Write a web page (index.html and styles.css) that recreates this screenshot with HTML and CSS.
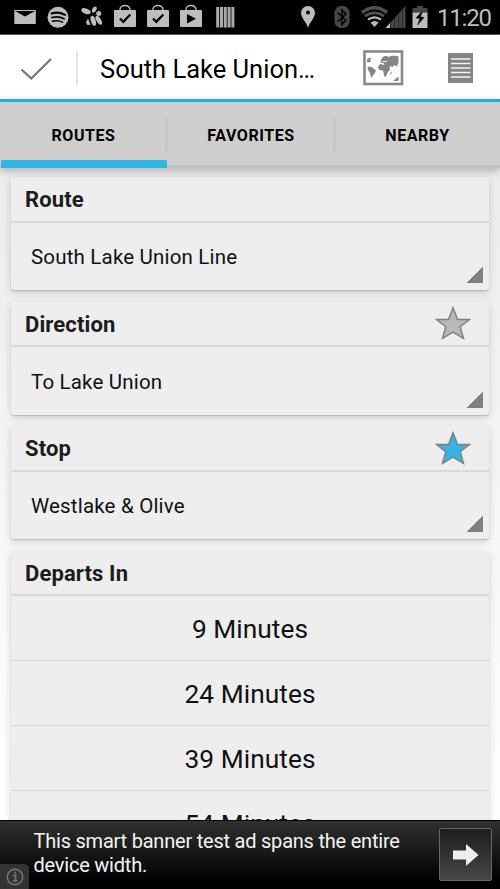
FILE: index.html
```html
<!DOCTYPE html>
<html lang="en">
<head>
<meta charset="utf-8">
<title>South Lake Union Line</title>
<link rel="stylesheet" href="styles.css">
</head>
<body>
<div class="screen">
  <svg class="defs" width="0" height="0" aria-hidden="true">
    <symbol id="bag" viewBox="0 0 32 34">
      <path d="M11 11V9.500a5 4 0 0 1 10 0V11" fill="none" stroke="#bdbdbd" stroke-width="1.400"/>
      <rect x="5" y="10" width="22" height="17" rx="1" fill="#bdbdbd"/>
    </symbol>
    <symbol id="star" viewBox="0 0 36 34">
      <path d="M18 1.800l4.500 11.600 12 .1-9.300 7.200 3.300 11.600L18 26 7.500 32.300l3.300-11.600-9.300-7.200 12-.1z" stroke="#808080" stroke-width="1.500"/>
    </symbol>
  </svg>

  <header class="status">
    <div class="notes">
      <svg viewBox="0 0 32 34"><rect x="5.300" y="10" width="21.500" height="14" fill="#bdbdbd"/><path d="M6 11h20l-10 5.500z"/></svg>
      <svg viewBox="0 0 32 34"><circle cx="16" cy="17.300" r="10.500" fill="#bdbdbd"/><g fill="none" stroke="#000" stroke-linecap="round"><path d="M9.500 13.500q7-2.300 13.500 1.300" stroke-width="2.100"/><path d="M10 17.500q6.500-1.800 12 1.200" stroke-width="1.800"/><path d="M10.500 21.200q5.500-1.500 10 1" stroke-width="1.500"/></g></svg>
      <svg viewBox="0 0 32 34"><g fill="#bdbdbd"><ellipse cx="10" cy="11.200" rx="4.900" ry="2.600" transform="rotate(20 10 11.200)"/><ellipse cx="18.300" cy="9.600" rx="2" ry="3.300" transform="rotate(30 18.300 9.600)"/><circle cx="22.700" cy="13.500" r="2.500"/><path d="M12 18.500l2.500 6.500-3.500-.2-1-2.500z"/><ellipse cx="17.300" cy="20.800" rx="2.400" ry="5.200" transform="rotate(-18 17.300 20.800)"/><ellipse cx="22.800" cy="20.300" rx="2.300" ry="5" transform="rotate(-30 22.800 20.300)"/></g></svg>
      <svg viewBox="0 0 32 34"><use href="#bag"/><path d="M11 18.500l3.300 3.300 7-7.300" fill="none" stroke="#000" stroke-width="2.300"/></svg>
      <svg viewBox="0 0 32 34"><use href="#bag"/><path d="M11 18.500l3.300 3.300 7-7.300" fill="none" stroke="#000" stroke-width="2.300"/></svg>
      <svg viewBox="0 0 32 34"><use href="#bag"/><path d="M12 14v9.500l9-4.700z"/></svg>
      <svg viewBox="0 0 32 34"><path d="M8.700 7v20.500M12.500 7v20.500M16.300 7v20.500M20.100 7v20.500M23.900 7v20.500" stroke="#aaa" stroke-width="3"/></svg>
    </div>
    <div class="system">
      <svg width="16" height="34" viewBox="0 0 16 34"><path d="M8 28C6.500 22 1 18 1 13a7 7 0 0 1 14 0c0 5-5.500 9-7 15z" fill="#bdbdbd"/><circle cx="8" cy="12.500" r="2" /></svg>
      <svg class="bluetooth" width="16" height="34" viewBox="0 0 16 34"><rect x=".5" y="6" width="15" height="22" rx="6.500" fill="#464646"/><path d="M3.800 12.500l8.200 8-4 4V10l4 4-8.200 7.500" fill="none" stroke="#000" stroke-width="1.500"/></svg>
      <svg class="signal" width="46" height="34" viewBox="0 0 46 34"><g fill="none"><path d="M2 12.500q12.500-9.500 25 0" stroke="#505050" stroke-width="3.600"/><path d="M5 16q9.500-6.500 19 0" stroke="#505050" stroke-width="3"/><path d="M8 19.700q6.500-4.700 13 0" stroke="#bdbdbd" stroke-width="2.200"/></g><path d="M10.500 22.500q4-3 8 0l-4 4.500z" fill="#bdbdbd"/><path d="M25.500 28L45.500 6v22z" fill="#464646"/><path d="M25.500 28l4.500-5v5z" fill="#bdbdbd"/><path d="M30.500 22v6M34.500 18v10M38.500 14v14M42.500 10v18" stroke="#242424" stroke-width=".8"/></svg>
      <svg class="battery" width="16" height="34" viewBox="0 0 16 34"><path d="M.5 12.500V8H5V5.800h6V8h4.500v4.500z" fill="#464646"/><path d="M.5 12.500h15V28H.5z" fill="#bdbdbd"/><path d="M10.500 11L4 18l4 .5-2.500 6.500 6.500-7.500-3.500-.5z" stroke="#000" stroke-width=".5"/></svg>
      <span class="clock">11:20</span>
    </div>
  </header>

  <div class="actionbar">
    <svg class="check" width="32" height="24" viewBox="0 0 32 24"><path d="M1.500 12.500l9.800 9L31 2" fill="none" stroke="#777" stroke-width="2.300"/></svg>
    <h1 class="title">South Lake Union…</h1>
    <svg class="map" width="41" height="36" viewBox="0 0 41 36"><rect x="1.500" y="1.500" width="37.500" height="32.500" fill="#fff" stroke="#888" stroke-width="2.600"/><g fill="#858585"><path d="M4 9.500l3-2 1.500 1-2 1.500 2 1-1.500 1-2 .5-1-1zM4.500 17l2-.5 3 1 3.500 3-1.500 3-3.500 4.500-1-5-2-3zM17.500 12.500l.5-3 2.500-3 3-.7 2 1.200 3-1.200h4l3 .7v6.500l-2 3.500-2-1.500-2.500 2.500-1-2-1.500 2 .5 2-2 2.500-2 4.500-1.500.3-1.500-6.300-4-.7-1-2.800 2-3 4.500 1-1-2z"/><path d="M27.500 22.500l1-1v2.500l-1 1.200zM30 31l5.500-4.500V31z"/></g><path d="M19.500 11.500h5" stroke="#fff" stroke-width=".8"/></svg>
    <svg class="list" width="25" height="30" viewBox="0 0 25 30"><path d="M0 0h25v30H0z" fill="#858585"/><path d="M3 6h19.500M3 10.500h19.500M3 15h19.500M3 19.500h19.500M3 24h19.500" stroke="#f4f4f4" stroke-width="1.600"/></svg>
  </div>

  <nav class="tabs">
    <div class="tab active">ROUTES</div>
    <div class="tab">FAVORITES</div>
    <div class="tab">NEARBY</div>
  </nav>

  <main class="content">
    <section class="card">
      <h2 class="head">Route</h2>
      <div class="spinner">South Lake Union Line</div>
    </section>
    <section class="card">
      <h2 class="head low">Direction<svg class="star" width="36" height="34"><use href="#star"/></svg></h2>
      <div class="spinner">To Lake Union</div>
    </section>
    <section class="card">
      <h2 class="head">Stop<svg class="star on" width="36" height="34"><use href="#star"/></svg></h2>
      <div class="spinner">Westlake &amp; Olive</div>
    </section>
    <section class="card times">
      <h2 class="head">Departs In</h2>
      <div class="time">9 Minutes</div>
      <div class="time">24 Minutes</div>
      <div class="time">39 Minutes</div>
      <div class="time">54 Minutes</div>
    </section>
  </main>

  <footer class="ad">
    <p class="adtext">This smart banner test ad spans the entire<br>device width.</p>
    <div class="go"><svg width="26" height="24" viewBox="0 0 26 24"><path d="M0 7.500h13V1l12.500 11L13 23v-6.500H0z" fill="#eee"/></svg></div>
    <div class="info"><svg width="18" height="18" viewBox="0 0 18 18"><circle cx="9" cy="9" r="7.700" fill="none" stroke="#777" stroke-width="1.400"/><path d="M7 7.500h2.500v5M6.800 13h4.700" fill="none" stroke="#777" stroke-width="1.600"/><circle cx="9" cy="4.700" r="1.100" fill="#777"/></svg></div>
  </footer>
</div>
</body>
</html>
```
FILE: styles.css
```css
* { box-sizing: border-box; }
body { margin: 0; font-family: Roboto, "Liberation Sans", sans-serif; color: #111; }
h1, h2, p { margin: 0; font-weight: 400; }
svg { display: block; flex: none; }
.defs { position: absolute; }
.screen { width: 500px; height: 889px; display: flex; flex-direction: column; overflow: hidden; background: #fff; }

.status { height: 35px; flex: none; display: flex; justify-content: space-between; background: #000; border-bottom: 1px solid #555; }
.notes { display: flex; padding-left: 9px; gap: 1.3px; }
.notes svg { width: 32px; height: 34px; }
.system { display: flex; width: 200px; }
.bluetooth { margin-left: 18px; }
.signal { margin-left: 10px; }
.battery { margin-left: 6px; }
.clock { margin-left: 9px; font-size: 24px; line-height: 37px; color: #bdbdbd; letter-spacing: -1.2px; white-space: nowrap; }

.actionbar { height: 64px; flex: none; display: flex; align-items: center; padding: 3px 0 0 20px; background: #fff; }
.title { width: 286px; height: 33px; margin-left: 24px; padding-left: 22px; border-left: 2px solid #e4e4e4; font-size: 25.500px; line-height: 34px; color: #000; white-space: nowrap; }
.map { margin: -1px 0 0 1px; }
.list { margin: -1px 0 0 44px; }

.tabs { height: 69px; flex: none; display: grid; grid-template-columns: 167px 168px 165px; border-top: 3px solid #19b0e3; background: linear-gradient(#cecece 63px, #bfbfbf 63px); box-shadow: 0 3px 8px rgba(0, 0, 0, .25); position: relative; }
.tab { display: flex; align-items: center; justify-content: center; font-size: 16px; letter-spacing: .55px; font-weight: 700; color: #000; background: linear-gradient(#bbb, #bbb) right 16px / 1px 33px no-repeat; }
.tab:last-child { background: none; }
.active { margin-left: 1px; border-bottom: 8px solid #33b5e5; padding: 8px 1px 0 0; }

.content { flex: 1; min-height: 0; overflow: hidden; padding: 9px 11px 0; background: linear-gradient(#ececec, #fff); }
.card { height: 113px; margin-bottom: 11.600px; background: #eee; border-radius: 1px 1px 3px 3px; box-shadow: 0 1px 1px rgba(0, 0, 0, .16), 0 3px 9px rgba(0, 0, 0, .15); }
.head { height: 45.500px; display: flex; align-items: center; justify-content: space-between; padding: 1px 18px 0 14px; border-bottom: 2px solid #d9d9d9; font-size: 22px; letter-spacing: .12px; font-weight: 700; color: #1c1c1c; }
.low { padding-top: 3px; }
.low .star { margin-top: -4px; }
.star { fill: #b8b8b8; }
.on { fill: #33b5e5; }
.spinner { height: 67.500px; display: flex; align-items: center; padding-left: 20px; padding-top: 2px; font-size: 20.500px; letter-spacing: .18px; background: linear-gradient(135deg, transparent 50%, #808080 50%) right 6px bottom 7px / 16px 16px no-repeat; }
.times { height: 400px; }
.time { height: 64.800px; display: flex; align-items: center; justify-content: center; padding-top: 2px; border-bottom: 1px solid #d6d6d6; font-size: 26.300px; letter-spacing: .05px; }

.ad { height: 69px; flex: none; position: relative; display: flex; justify-content: space-between; padding: 7px 8px 0 33.500px; border-top: 1px solid #000; background: linear-gradient(#303030, #000 90%); }
.adtext { padding-top: 2px; font-size: 20px; letter-spacing: -.22px; line-height: 23.500px; color: #f4f4f4; white-space: nowrap; }
.go { width: 53px; height: 53px; display: flex; align-items: center; justify-content: center; border: 1px solid #666; border-radius: 2px; background: linear-gradient(#1c1c1c, #484848); }
.info { position: absolute; left: 0; bottom: 0; width: 29px; height: 25px; padding: 4px 0 0 6px; border-radius: 0 5px 0 0; background: #333; }
```
